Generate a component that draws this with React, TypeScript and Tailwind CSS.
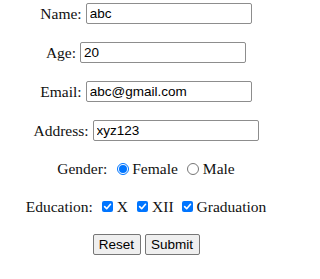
import * as React from "react";

const serif = "font-['Liberation_Serif',serif]";
const sans = "font-['Liberation_Sans',Arial,sans-serif]";

function TextField({ label, value }: { label: string; value: string }) {
  return (
    <div className="flex h-[21px] items-center justify-center gap-[4px]">
      <span className="leading-none">{label}</span>
      <input
        type="text"
        defaultValue={value}
        className={`h-[21px] w-[166px] rounded-[2px] border border-[#8d8d8d] bg-white pl-[3px] text-[13.5px] text-black outline-none ${sans}`}
      />
    </div>
  );
}

function Radio({ checked }: { checked?: boolean }) {
  return checked ? (
    <span className="flex h-[12px] w-[12px] items-center justify-center rounded-full border border-[#0075ff] bg-white">
      <span className="block h-[8px] w-[8px] rounded-full bg-[#0075ff]" />
    </span>
  ) : (
    <span className="block h-[12px] w-[12px] rounded-full border border-[#767676] bg-white" />
  );
}

function Check() {
  return (
    <span className="flex h-[11px] w-[11px] items-center justify-center rounded-[2px] bg-[#0075ff]">
      <svg width="9" height="9" viewBox="0 0 10 10" fill="none">
        <path d="M1.8 5.2 L4.1 7.4 L8.3 2.6" stroke="white" strokeWidth="1.8" strokeLinecap="round" strokeLinejoin="round" />
      </svg>
    </span>
  );
}

export default function App() {
  return (
    <div className={`h-[279px] w-[300px] bg-white text-[15.5px] text-[#111] ${serif}`}>
      <div className="flex w-[292px] flex-col pt-[3px]">
        <TextField label="Name:" value="abc" />
        <div className="mt-[18px]">
          <TextField label="Age:" value="20" />
        </div>
        <div className="mt-[18px]">
          <TextField label="Email:" value="abc@gmail.com" />
        </div>
        <div className="mt-[18px]">
          <TextField label="Address:" value="xyz123" />
        </div>

        {/* Gender */}
        <div className="mt-[17px] flex h-[21px] items-center justify-center">
          <span className="leading-none">Gender:</span>
          <span className="ml-[10px] flex"><Radio checked /></span>
          <span className="ml-[3px] leading-none">Female</span>
          <span className="ml-[9px] flex"><Radio /></span>
          <span className="ml-[4px] leading-none">Male</span>
        </div>

        {/* Education */}
        <div className="mt-[17px] flex h-[21px] items-center justify-center">
          <span className="leading-none">Education:</span>
          <span className="ml-[9px] flex"><Check /></span>
          <span className="ml-[4px] leading-none">X</span>
          <span className="ml-[9px] flex"><Check /></span>
          <span className="ml-[4px] leading-none">XII</span>
          <span className="ml-[8px] flex"><Check /></span>
          <span className="ml-[4px] leading-none">Graduation</span>
        </div>

        <div className="mt-[17px] flex h-[21px] items-center justify-center gap-[4px]">
          <button className={`h-[21px] w-[48px] rounded-[2px] border border-[#767676] bg-[#efefef] text-[13.5px] text-black ${sans}`}>
            Reset
          </button>
          <button className={`h-[21px] w-[55px] rounded-[2px] border border-[#767676] bg-[#efefef] text-[13.5px] text-black ${sans}`}>
            Submit
          </button>
        </div>
      </div>
    </div>
  );
}
